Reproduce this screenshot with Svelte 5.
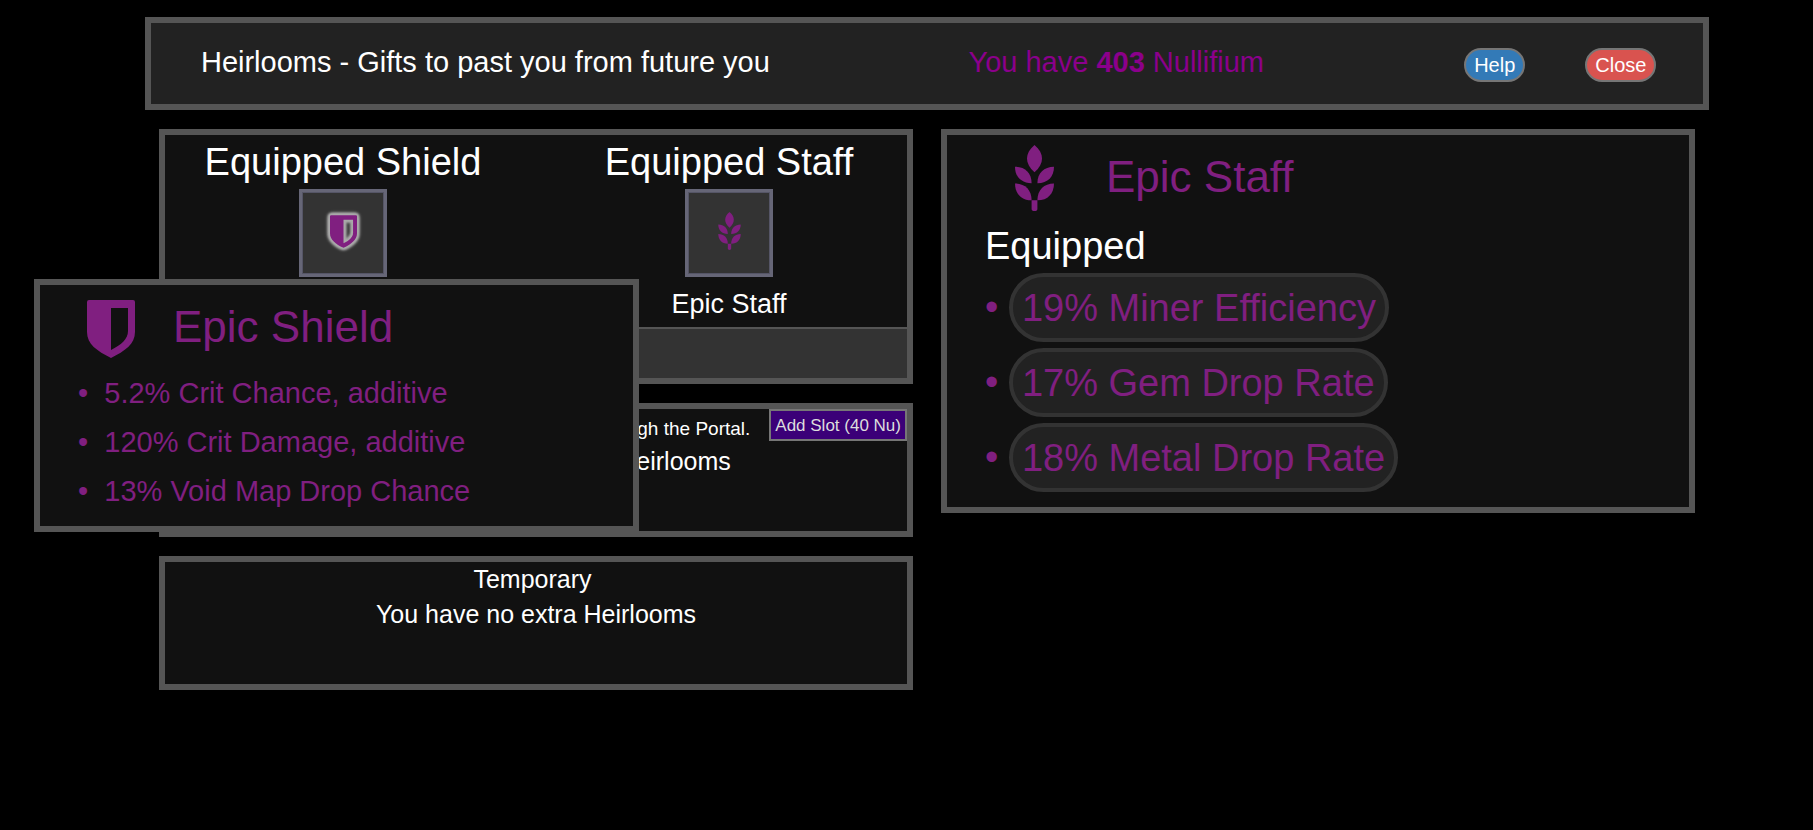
<script lang="ts">
  type Heirloom = { name: string; icon: "shield" | "staff"; mods: string[] };

  const nullifium = 403;
  const slotCost = 40;

  const shield: Heirloom = {
    name: "Epic Shield",
    icon: "shield",
    mods: ["5.2% Crit Chance, additive", "120% Crit Damage, additive", "13% Void Map Drop Chance"],
  };

  const staff: Heirloom = {
    name: "Epic Staff",
    icon: "staff",
    mods: ["19% Miner Efficiency", "17% Gem Drop Rate", "18% Metal Drop Rate"],
  };

  let selected = $state(staff);
  let hovered: Heirloom | null = $state(shield);
</script>

{#snippet icon(kind: string)}
  {#if kind === "shield"}
    <svg class="icon shield" viewBox="0 0 48 58" aria-hidden="true">
      <path
        fill-rule="evenodd"
        d="M2 0H46Q48 0 48 2V32C48 44 38 51 24 58C10 51 0 44 0 32V2Q0 0 2 0ZM24 8V50C34 45 41 39 41 31V8Z"
      />
    </svg>
  {:else}
    <svg class="icon staff" viewBox="0 0 39 66" aria-hidden="true">
      <path d="M19.5 0C29.5 8.5 29.5 18.5 19.5 27.3C9.5 18.5 9.5 8.5 19.5 0Z" />
      <path d="M22.4 38.2C22.4 28 29 21.7 39 21.7C39 31.5 33 38.2 22.4 38.2Z" />
      <path d="M16.6 38.2C16.6 28 10 21.7 0 21.7C0 31.5 6 38.2 16.6 38.2Z" />
      <path d="M22.4 55.3C22.4 44.8 29 38.4 39 38.4C39 48.2 33 55.3 22.4 55.3Z" />
      <path d="M16.6 55.3C16.6 44.8 10 38.4 0 38.4C0 48.2 6 55.3 16.6 55.3Z" />
      <path d="M16.6 55.3H22.4V64Q22.4 66 19.5 66Q16.6 66 16.6 64Z" />
    </svg>
  {/if}
{/snippet}

<div class="page">
  <header class="panel top">
    <h1>Heirlooms - Gifts to past you from future you</h1>
    <div class="nullifium">You have <b>{nullifium}</b> Nullifium</div>
    <div><button class="btn info">Help</button></div>
    <div><button class="btn danger">Close</button></div>
  </header>

  <main class="columns">
    <div class="left">
      <section class="panel">
        <div class="slots">
          <div class="slot">
            <h2>Equipped Shield</h2>
            <button
              class="heirloom glow"
              aria-label={shield.name}
              onmouseenter={() => (hovered = shield)}
              onclick={() => (selected = shield)}
            >
              {@render icon("shield")}
            </button>
            <div class="name">{shield.name}</div>
          </div>
          <div class="slot">
            <h2>Equipped Staff</h2>
            <button class="heirloom" aria-label={staff.name} onclick={() => (selected = staff)}>
              {@render icon("staff")}
            </button>
            <div class="name">{staff.name}</div>
          </div>
        </div>
        <div class="actions"></div>
      </section>

      <section class="panel storage">
        <div class="carried">
          <div class="carried-title">Carried <small>- These will follow you through the Portal.</small></div>
          <button class="add-slot">Add Slot ({slotCost} Nu)</button>
        </div>
        <div>You are not carrying any Heirlooms</div>
      </section>

      <section class="panel storage">
        <div>Temporary&nbsp;</div>
        <div>You have no extra Heirlooms</div>
      </section>
    </div>

    <section class="panel details">
      <div class="details-head">
        {@render icon(selected.icon)}
        <span class="title">{selected.name}</span>
      </div>
      <h2>Equipped</h2>
      <ul class="mods">
        {#each selected.mods as mod}
          <li><button class="mod">{mod}</button></li>
        {/each}
      </ul>
    </section>
  </main>

  {#if hovered}
    <div class="panel tooltip" role="tooltip">
      <div class="tooltip-head">
        {@render icon(hovered.icon)}
        <span class="title">{hovered.name}</span>
      </div>
      <ul>
        {#each hovered.mods as mod}
          <li>{mod}</li>
        {/each}
      </ul>
    </div>
  {/if}
</div>

<style>
  :global(body) {
    background: #000;
  }

  .page {
    position: relative;
    padding: 17px 104px 17px 145px;
    color: #fff;
    font-family: "Liberation Sans", Arial, sans-serif;
  }

  .page * {
    box-sizing: border-box;
  }

  button {
    font-family: inherit;
    cursor: pointer;
  }

  h1,
  h2,
  ul {
    margin: 0;
    padding: 0;
    font-weight: normal;
  }

  ul {
    list-style: none;
  }

  .panel {
    border: 6px solid #555;
    background: #111;
  }

  .icon {
    display: block;
    fill: #801f80;
  }

  .title {
    font-size: 44px;
    line-height: 62px;
  }

  /* Header */
  .top {
    display: grid;
    grid-template-columns: 5fr 5fr 1fr 1fr;
    align-items: baseline;
    padding: 19px 19px 21px;
    background: #222;
    font-size: 29px;
    line-height: 41px;
    text-align: center;
  }

  h1 {
    font-size: 29px;
  }

  .nullifium {
    color: #8b008b;
  }

  .btn {
    height: 34px;
    padding: 0 8px;
    border: 2px solid #767676;
    border-radius: 17px;
    color: #fff;
    font-size: 20px;
    line-height: 28px;
  }

  .info {
    background: #337ab7;
  }

  .danger {
    background: #d9534f;
  }

  /* Body */
  .columns {
    display: grid;
    grid-template-columns: 1fr 1fr;
    gap: 28px;
    align-items: start;
    padding: 19px 14px 0;
  }

  .left {
    display: grid;
    gap: 19px;
  }

  h2 {
    font-size: 38px;
    line-height: 54px;
  }

  .slots {
    display: grid;
    grid-template-columns: 1fr 1fr;
    margin: 0 -15px;
    text-align: center;
  }

  .heirloom {
    display: flex;
    align-items: center;
    justify-content: center;
    width: 88px;
    height: 88px;
    margin: 0 auto;
    padding: 0 0 4px;
    border: 3px solid #667;
    background: #333;
    box-shadow: inset 0 0 0 1px #556;
  }

  .heirloom .shield {
    width: 27px;
    height: 33px;
  }

  .heirloom .staff {
    width: 23px;
    height: 38px;
  }

  .glow .icon {
    overflow: visible;
    filter: drop-shadow(0 0 1px #aaa) drop-shadow(0 0 1px #aaa) drop-shadow(0 0 1px #aaa)
      drop-shadow(0 0 1px #aaa) drop-shadow(0 0 1px #aaa);
  }

  .name {
    padding: 8px 0 4px;
    font-size: 27px;
    line-height: 38px;
  }

  .actions {
    height: 51px;
    border-top: 2px solid #555;
    background: #333;
  }

  .storage {
    min-height: 134px;
    font-size: 25px;
    line-height: 35px;
    text-align: center;
  }

  .carried {
    display: flex;
    justify-content: flex-end;
    height: 35px;
  }

  .carried-title {
    padding-right: 19px;
  }

  small {
    font-size: 19px;
  }

  .add-slot {
    height: 32px;
    padding: 2px 4px 0;
    border: 2px solid #767676;
    background: #3b0078;
    color: #ddd;
    font-size: 17px;
    line-height: 24px;
  }

  /* Selected heirloom */
  .details {
    padding: 0 37px 15px 38px;
  }

  .details-head {
    display: flex;
    align-items: center;
    gap: 52px;
    height: 84px;
    padding: 2px 0 0 30px;
    color: #801f80;
  }

  .details-head .icon {
    width: 39px;
    height: 66px;
  }

  .details-head .title {
    padding-bottom: 2px;
  }

  .mods {
    display: grid;
    gap: 6px;
    color: #801f80;
    font-size: 38px;
  }

  .mods li {
    display: flex;
    align-items: center;
  }

  .mods li::before {
    content: "•\00a0";
  }

  .mod {
    height: 69px;
    padding: 2px 9px 0;
    border: 4px solid #333;
    border-radius: 35px;
    background: #222;
    color: inherit;
    font-size: 38px;
  }

  /* Tooltip */
  .tooltip {
    position: absolute;
    top: 279px;
    left: 34px;
    width: 605px;
    padding: 0 37px 10px 38px;
    color: #801f80;
  }

  .tooltip-head {
    display: flex;
    align-items: center;
    gap: 38px;
    height: 84px;
    padding: 4px 0 0 9px;
  }

  .tooltip-head .icon {
    width: 48px;
    height: 58px;
  }

  .tooltip-head .title {
    padding-bottom: 4px;
  }

  .tooltip li {
    font-size: 29px;
    line-height: 49px;
  }

  .tooltip li::before {
    content: "•\00a0\00a0";
  }
</style>
